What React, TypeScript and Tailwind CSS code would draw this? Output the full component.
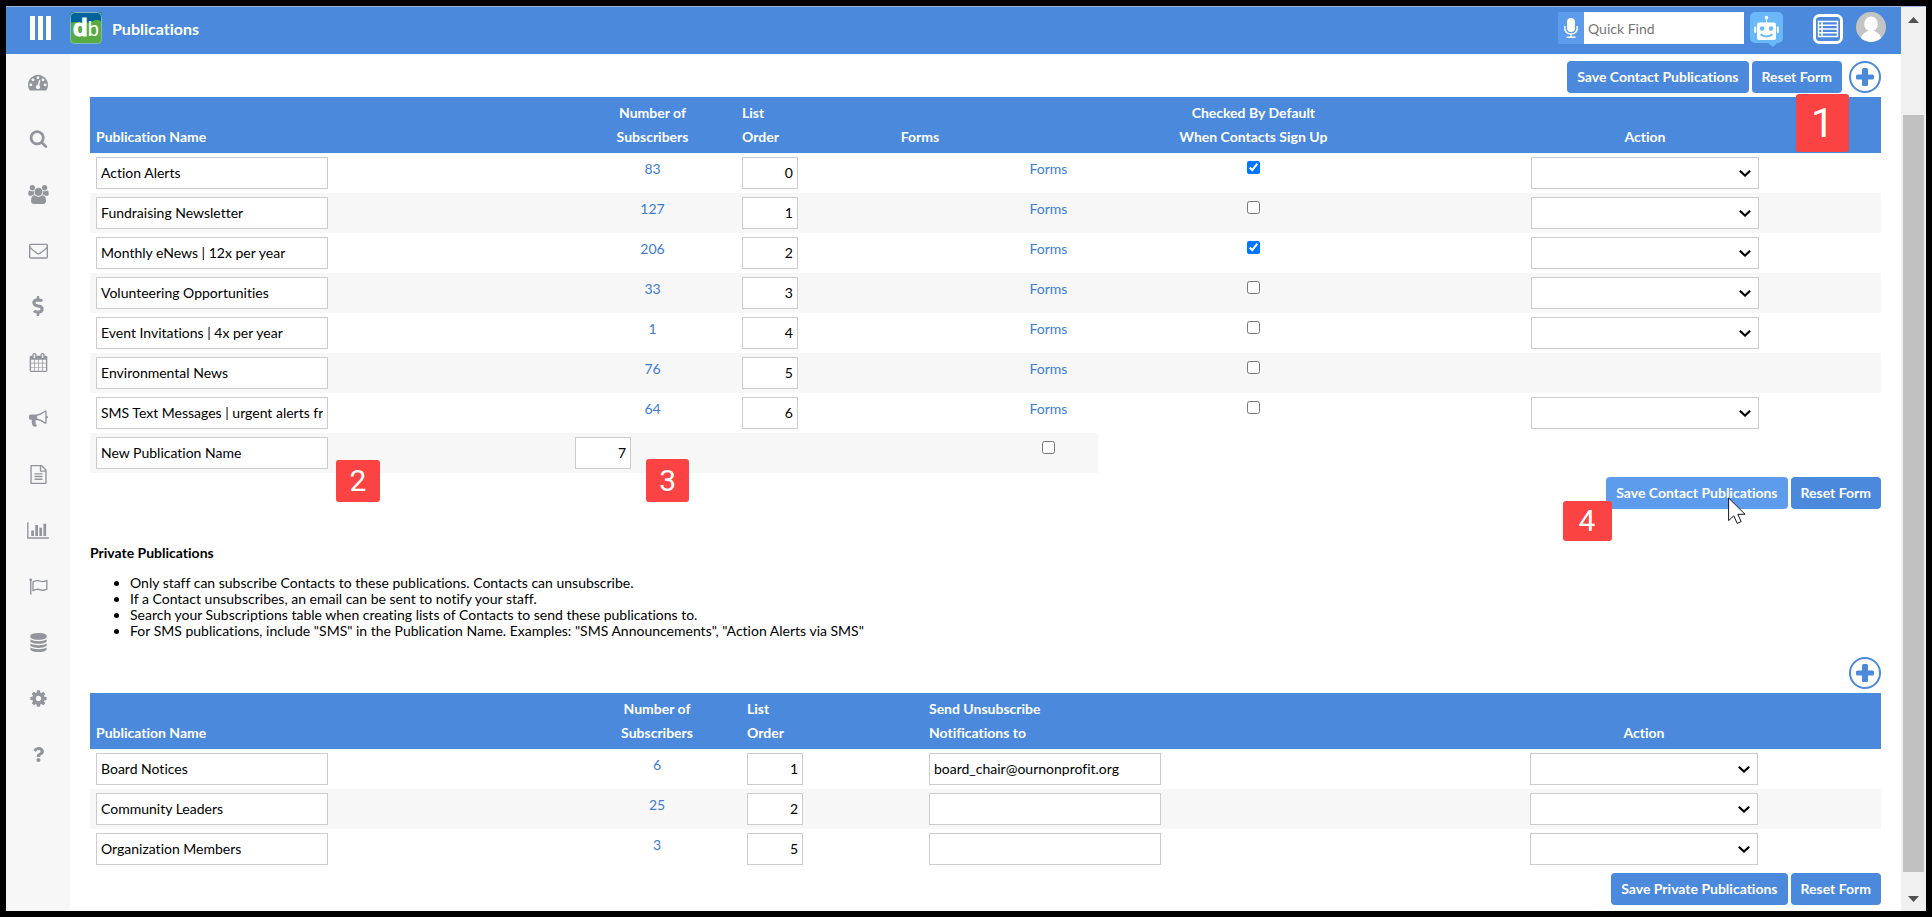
import { FaDollarSign, FaQuestion } from 'react-icons/fa'

interface IconProps {
  className?: string
}

interface Publication {
  name: string
  subscribers: number
  order: number
  checked?: boolean
  hasAction?: boolean
  notify?: string
}

const contactPublications: Publication[] = [
  { name: 'Action Alerts', subscribers: 83, order: 0, checked: true, hasAction: true },
  { name: 'Fundraising Newsletter', subscribers: 127, order: 1, hasAction: true },
  { name: 'Monthly eNews | 12x per year', subscribers: 206, order: 2, checked: true, hasAction: true },
  { name: 'Volunteering Opportunities', subscribers: 33, order: 3, hasAction: true },
  { name: 'Event Invitations | 4x per year', subscribers: 1, order: 4, hasAction: true },
  { name: 'Environmental News', subscribers: 76, order: 5 },
  { name: 'SMS Text Messages | urgent alerts from us', subscribers: 64, order: 6, hasAction: true }
]

const privatePublications: Publication[] = [
  { name: 'Board Notices', subscribers: 6, order: 1, notify: 'board_chair@ournonprofit.org' },
  { name: 'Community Leaders', subscribers: 25, order: 2, notify: '' },
  { name: 'Organization Members', subscribers: 3, order: 5, notify: '' }
]

const notes = [
  'Only staff can subscribe Contacts to these publications. Contacts can unsubscribe.',
  'If a Contact unsubscribes, an email can be sent to notify your staff.',
  'Search your Subscriptions table when creating lists of Contacts to send these publications to.',
  'For SMS publications, include "SMS" in the Publication Name. Examples: "SMS Announcements", "Action Alerts via SMS"'
]

const glyph = (viewBox: string, d: string) =>
  function Glyph({ className }: IconProps) {
    return (
      <svg viewBox={viewBox} fill="currentColor" className={className} aria-hidden="true">
        <path d={d} />
      </svg>
    )
  }

const Dashboard = glyph(
  '0 0 1792 1792',
  'M384 1152q0-53-37.5-90.5t-90.5-37.5-90.5 37.5-37.5 90.5 37.5 90.5 90.5 37.5 90.5-37.5 37.5-90.5zm192-448q0-53-37.5-90.5t-90.5-37.5-90.5 37.5-37.5 90.5 37.5 90.5 90.5 37.5 90.5-37.5 37.5-90.5zm428 481l101-382q6-26-7.5-48.5t-38.5-29.5-48 6.5-30 39.5l-101 382q-60 5-107 43.5t-63 98.5q-20 77 20 146t117 89 146-20 89-117q16-60-6-117t-72-91zm660-33q0-53-37.5-90.5t-90.5-37.5-90.5 37.5-37.5 90.5 37.5 90.5 90.5 37.5 90.5-37.5 37.5-90.5zm-640-640q0-53-37.5-90.5t-90.5-37.5-90.5 37.5-37.5 90.5 37.5 90.5 90.5 37.5 90.5-37.5 37.5-90.5zm448 192q0-53-37.5-90.5t-90.5-37.5-90.5 37.5-37.5 90.5 37.5 90.5 90.5 37.5 90.5-37.5 37.5-90.5zm320 448q0 261-141 483-19 29-54 29h-1402q-35 0-54-29-141-221-141-483 0-182 71-348t191-286 286-191 348-71 348 71 286 191 191 286 71 348z'
)
const Search = glyph(
  '0 0 1792 1792',
  'M1216 832q0-185-131.5-316.5t-316.5-131.5-316.5 131.5-131.5 316.5 131.5 316.5 316.5 131.5 316.5-131.5 131.5-316.5zm512 832q0 52-38 90t-90 38q-54 0-90-38l-343-342q-179 124-399 124-143 0-273.5-55.5t-225-150-150-225-55.5-273.5 55.5-273.5 150-225 225-150 273.5-55.5 273.5 55.5 225 150 150 225 55.5 273.5q0 220-124 399l343 343q37 37 37 90z'
)
const Group = glyph(
  '0 0 1920 1792',
  'M593 896q-162 5-265 128h-134q-82 0-138-40.5t-56-118.5q0-353 124-353 6 0 43.5 21t97.5 42.5 119 21.5q67 0 133-23-5 37-5 66 0 139 81 256zm1071 637q0 120-73 189.5t-194 69.5h-874q-121 0-194-69.5t-73-189.5q0-53 3.5-103.5t14-109 26.5-108.5 43-97.5 62-81 85.5-53.5 111.5-20q10 0 43 21.5t73 48 107 48 135 21.5 135-21.5 107-48 73-48 43-21.5q61 0 111.5 20t85.5 53.5 62 81 43 97.5 26.5 108.5 14 109 3.5 103.5zm-1024-1277q0 106-75 181t-181 75-181-75-75-181 75-181 181-75 181 75 75 181zm704 384q0 159-112.5 271.5t-271.5 112.5-271.5-112.5-112.5-271.5 112.5-271.5 271.5-112.5 271.5 112.5 112.5 271.5zm576 225q0 78-56 118.5t-138 40.5h-134q-103-123-265-128 81-117 81-256 0-29-5-66 66 23 133 23 59 0 119-21.5t97.5-42.5 43.5-21q124 0 124 353zm-128-609q0 106-75 181t-181 75-181-75-75-181 75-181 181-75 181 75 75 181z'
)
const Envelope = glyph(
  '0 0 1792 1792',
  'M1664 1504v-768q-32 36-69 66-268 206-426 338-51 43-83 67t-86.5 48.5-102.5 24.5h-2q-48 0-102.5-24.5t-86.5-48.5-83-67q-158-132-426-338-37-30-69-66v768q0 13 9.5 22.5t22.5 9.5h1472q13 0 22.5-9.5t9.5-22.5zm0-1051v-24.5l-.5-13-3-12.5-5.5-9-9-7.5-14-2.5h-1472q-13 0-22.5 9.5t-9.5 22.5q0 168 147 284 193 152 401 317 6 5 35 29.5t46 37.5 44.5 31.5 50.5 27.5 43 9h2q20 0 43-9t50.5-27.5 44.5-31.5 46-37.5 35-29.5q208-165 401-317 54-43 100.5-115.5t46.5-131.5zm128-37v1088q0 66-47 113t-113 47h-1472q-66 0-113-47t-47-113v-1088q0-66 47-113t113-47h1472q66 0 113 47t47 113z'
)
const Calendar = glyph(
  '0 0 1792 1792',
  'M192 1664h288v-288h-288v288zm352 0h320v-288h-320v288zm-352-352h288v-320h-288v320zm352 0h320v-320h-320v320zm-352-384h288v-288h-288v288zm736 736h320v-288h-320v288zm-384-736h320v-288h-320v288zm768 736h288v-288h-288v288zm-384-352h320v-320h-320v320zm-352-864v-288q0-13-9.5-22.5t-22.5-9.5h-64q-13 0-22.5 9.5t-9.5 22.5v288q0 13 9.5 22.5t22.5 9.5h64q13 0 22.5-9.5t9.5-22.5zm736 864h288v-320h-288v320zm-384-384h320v-288h-320v288zm384 0h288v-288h-288v288zm32-480v-288q0-13-9.5-22.5t-22.5-9.5h-64q-13 0-22.5 9.5t-9.5 22.5v288q0 13 9.5 22.5t22.5 9.5h64q13 0 22.5-9.5t9.5-22.5zm384-64v1280q0 52-38 90t-90 38h-1408q-52 0-90-38t-38-90v-1280q0-52 38-90t90-38h128v-96q0-66 47-113t113-47h64q66 0 113 47t47 113v96h384v-96q0-66 47-113t113-47h64q66 0 113 47t47 113v96h128q52 0 90 38t38 90z'
)
const Bullhorn = glyph(
  '0 0 1792 1792',
  'M1664 640q53 0 90.5 37.5t37.5 90.5-37.5 90.5-90.5 37.5v384q0 52-38 90t-90 38q-417-347-812-380-58 19-91 66t-31 100.5 40 92.5q-20 33-23 65.5t6 58 33.5 55 48 50 61.5 50.5q-29 58-111.5 83t-168.5 11.5-132-55.5q-7-23-29.5-87.5t-32-94.5-23-89-15-101 3.5-98.5 22-110.5h-122q-66 0-113-47t-47-113v-192q0-66 47-113t113-47h480q435 0 896-384 52 0 90 38t38 90v384zm-128 604v-954q-394 302-768 343v270q377 42 768 341z'
)
const FileText = glyph(
  '0 0 1792 1792',
  'M1596 380q28 28 48 76t20 88v1152q0 40-28 68t-68 28h-1344q-40 0-68-28t-28-68v-1600q0-40 28-68t68-28h896q40 0 88 20t76 48zm-444-244v376h376q-10-29-22-41l-313-313q-12-12-41-22zm384 1528v-1024h-416q-40 0-68-28t-28-68v-416h-768v1536h1280zm-1024-864q0-14 9-23t23-9h704q14 0 23 9t9 23v64q0 14-9 23t-23 9h-704q-14 0-23-9t-9-23v-64zm736 224q14 0 23 9t9 23v64q0 14-9 23t-23 9h-704q-14 0-23-9t-9-23v-64q0-14 9-23t23-9h704zm0 256q14 0 23 9t9 23v64q0 14-9 23t-23 9h-704q-14 0-23-9t-9-23v-64q0-14 9-23t23-9h704z'
)
const BarChart = glyph(
  '0 0 2048 1792',
  'M640 896v512h-256v-512h256zm384-512v1024h-256v-1024h256zm1024 1152v128h-2048v-1536h128v1408h1920zm-640-896v768h-256v-768h256zm384-384v1152h-256v-1152h256z'
)
const Database = glyph(
  '-64 0 1792 1792',
  'M832 768q237 0 443-43t325-127v170q0 69-103 128t-280 93.5-385 34.5-385-34.5-280-93.5-103-128v-170q119 84 325 127t443 43zm0 768q237 0 443-43t325-127v170q0 69-103 128t-280 93.5-385 34.5-385-34.5-280-93.5-103-128v-170q119 84 325 127t443 43zm0-384q237 0 443-43t325-127v170q0 69-103 128t-280 93.5-385 34.5-385-34.5-280-93.5-103-128v-170q119 84 325 127t443 43zm0-1152q208 0 385 34.5t280 93.5 103 128v128q0 69-103 128t-280 93.5-385 34.5-385-34.5-280-93.5-103-128v-128q0-69 103-128t280-93.5 385-34.5z'
)
const Cog = glyph(
  '0 0 1792 1792',
  'M1152 896q0-106-75-181t-181-75-181 75-75 181 75 181 181 75 181-75 75-181zm512-109v222q0 12-8 23t-20 13l-185 28q-19 54-39 91 35 50 107 138 10 12 10 25t-9 23q-27 37-99 108t-94 71q-12 0-26-9l-138-108q-44 23-91 38-16 136-29 186-7 28-36 28h-222q-14 0-24.5-8.5t-11.5-21.5l-28-184q-49-16-90-37l-141 107q-10 9-25 9-14 0-25-11-126-114-165-168-7-10-7-23 0-12 8-23 15-21 51-66.5t54-70.5q-27-50-41-99l-183-27q-13-2-21-12.5t-8-23.5v-222q0-12 8-23t19-13l186-28q14-46 39-92-40-57-107-138-10-12-10-24 0-10 9-23 26-36 98.5-107.5t94.5-71.5q13 0 26 10l138 107q44-23 91-38 16-136 29-186 7-28 36-28h222q14 0 24.5 8.5t11.5 21.5l28 184q49 16 90 37l142-107q9-9 24-9 13 0 25 10 129 119 165 170 7 8 7 22 0 12-8 23-15 21-51 66.5t-54 70.5q26 50 41 98l183 28q13 2 21 12.5t8 23.5z'
)
const Plus = glyph('0 0 18 18', 'M7.5 0h3q1.5 0 1.5 1.5V6.500h4.500q1.500 0 1.500 1.500v2q0 1.500-1.500 1.500H12v5q0 1.500-1.500 1.500h-3Q6 18 6 16.500v-5H1.500Q0 11.500 0 10V8q0-1.500 1.500-1.500H6v-5Q6 0 7.500 0z')

function Flag({ className }: IconProps) {
  return (
    <svg viewBox="0 0 20 20" className={className} fill="none" stroke="currentColor" aria-hidden="true">
      <circle cx="1.8" cy="3" r="1.5" fill="currentColor" stroke="none" />
      <path d="M1.8 3v15.500" strokeWidth="1.5" />
      <path d="M4.200 5.200c4-2.300 5.500-1.900 8 -.7 2.200 1 3.800.4 6.600-1v9.300c-2.700 1.400-4.500 1.900-6.800.7-2.300-1.100-4-1.300-7.800.9z" strokeWidth="1.4" strokeLinejoin="round" />
    </svg>
  )
}

function Microphone() {
  return (
    <svg viewBox="0 0 14 20" className="h-5 w-3.5" fill="none" stroke="white" aria-hidden="true">
      <rect x="3" y="0" width="8" height="14" rx="4" fill="white" stroke="none" />
      <path d="M.8 8v2.500a6.200 5.600 0 0 0 12.400 0V8M7 16v3M2.500 19.200h9" strokeWidth="1.5" />
    </svg>
  )
}

function Robot() {
  return (
    <svg viewBox="0 0 33 35" className="h-[35px] w-[33px]" aria-hidden="true">
      <path d="M5 0h23a5 5 0 0 1 5 5v21a5 5 0 0 1-5 5h-1l-4 4-5-4H5a5 5 0 0 1-5-5V5a5 5 0 0 1 5-5z" fill="#69b8f7" />
      <circle cx="16.5" cy="5.5" r="1.7" fill="white" />
      <path d="M16.500 6v5" stroke="white" strokeWidth="1.2" />
      <rect x="7" y="10.5" width="19" height="17.5" rx="2" fill="white" />
      <rect x="4.2" y="14.5" width="2" height="6.5" rx="1" fill="white" />
      <rect x="26.8" y="14.5" width="2" height="6.5" rx="1" fill="white" />
      <circle cx="12" cy="16.5" r="2.2" fill="#69b8f7" />
      <circle cx="21" cy="16.5" r="2.2" fill="#69b8f7" />
      <path d="M10.500 22.300c3.500 2.800 8.500 2.800 12 0" fill="none" stroke="#69b8f7" strokeWidth="2" />
    </svg>
  )
}

function ListMenu() {
  return (
    <svg viewBox="0 0 30 30" className="size-[30px]" fill="none" stroke="white" aria-hidden="true">
      <rect x="1.5" y="1.5" width="27" height="27" rx="5" strokeWidth="3" />
      <rect x="5.5" y="7.5" width="19" height="15" strokeWidth="1.5" />
      <path d="M5 11.300h20M5 15h20M5 18.700h20M9 7v16" strokeWidth="1.5" />
    </svg>
  )
}

function Avatar() {
  return (
    <svg viewBox="0 0 30 30" className="size-[30px] rounded-full" aria-hidden="true">
      <rect width="30" height="30" fill="#c4c4c4" />
      <ellipse cx="15" cy="12" rx="6.8" ry="7.5" fill="white" />
      <path d="M4 30c0-6 3.500-9 8-11h6c4.500 2 8 5 8 11z" fill="white" />
    </svg>
  )
}

function Logo() {
  return (
    <div className="relative flex size-8 items-center justify-center">
      <svg viewBox="0 0 32 32" className="absolute inset-0 size-8" aria-hidden="true">
        <rect width="32" height="32" rx="4" fill="#58ab42" />
        <path d="M4 0h24a4 4 0 0 1 4 4v6c-3-2.500-6-2.500-10-.5-6 3-14-1.500-22 1.500V4a4 4 0 0 1 4-4z" fill="#00639c" />
        <rect x=".5" y=".5" width="31" height="31" rx="4" fill="none" stroke="#7fb9c4" />
      </svg>
      <span className="relative flex items-baseline font-['Liberation_Sans',sans-serif] text-white">
        <span className="text-2xl leading-7 font-bold [-webkit-text-stroke:1px_white]">d</span>
        <span className="text-xl leading-7">b</span>
      </span>
    </div>
  )
}

const sidebarItems = [
  { name: 'Dashboard', icon: Dashboard, size: 'size-5' },
  { name: 'Search', icon: Search, size: 'size-[19px]' },
  { name: 'Contacts', icon: Group, size: 'h-[19px] w-[21px]' },
  { name: 'Email', icon: Envelope, size: 'size-[19px]' },
  { name: 'Donations', icon: FaDollarSign, size: 'size-5' },
  { name: 'Events', icon: Calendar, size: 'size-[19px]' },
  { name: 'Campaigns', icon: Bullhorn, size: 'size-[19px]' },
  { name: 'Forms', icon: FileText, size: 'size-[19px]' },
  { name: 'Reports', icon: BarChart, size: 'h-[19px] w-[22px]' },
  { name: 'Flags', icon: Flag, size: 'size-[19px]' },
  { name: 'Data', icon: Database, size: 'size-[19px]' },
  { name: 'Settings', icon: Cog, size: 'size-[19px]' },
  { name: 'Help', icon: FaQuestion, size: 'size-[15px]' }
]

function Sidebar() {
  return (
    <nav className="flex w-16 shrink-0 flex-col bg-[#f7f7f7] text-[#92959c]">
      {sidebarItems.map((item) => (
        <a key={item.name} href="#" aria-label={item.name} className="flex h-14 items-center justify-center">
          <item.icon className={item.size} />
        </a>
      ))}
    </nav>
  )
}

function Header() {
  return (
    <header className="flex h-12 items-start border-t border-[#a3b4dc] bg-[#4a89dc] pt-[5px]">
      <button type="button" aria-label="Menu" className="flex h-8 w-16 items-center gap-[3px] pl-6">
        <span className="h-6 w-[5px] bg-white" />
        <span className="h-6 w-[5px] bg-white" />
        <span className="h-6 w-[5px] bg-white" />
      </button>
      <Logo />
      <h1 className="ml-2.5 text-base leading-[34px] font-bold text-white">Publications</h1>
      <div className="ml-auto flex items-start pr-[15px]">
        <button type="button" aria-label="Voice search" className="flex h-8 w-[26px] items-center justify-center bg-[#5d9cec]">
          <Microphone />
        </button>
        <input
          type="text"
          aria-label="Quick Find"
          placeholder="Quick Find"
          className="h-8 w-40 bg-white px-1 placeholder:text-[#757575]"
        />
        <button type="button" aria-label="Assistant" className="ml-1.5">
          <Robot />
        </button>
        <button type="button" aria-label="List menu" className="mt-0.5 ml-[30px]">
          <ListMenu />
        </button>
        <button type="button" aria-label="Account" className="ml-[13px]">
          <Avatar />
        </button>
      </div>
    </header>
  )
}

function Button({ label, active }: { label: string; active?: boolean }) {
  return (
    <button
      type="button"
      className={`h-8 rounded px-2.5 font-bold text-white ${active ? 'bg-[#5d9cec]' : 'bg-[#4a89dc]'}`}
    >
      {label}
    </button>
  )
}

function AddButton() {
  return (
    <button
      type="button"
      aria-label="Add publication"
      className="flex size-8 items-center justify-center rounded-full border-2 border-[#4a89dc] text-[#4a89dc]"
    >
      <Plus className="size-[18px]" />
    </button>
  )
}

function TextBox({ label, value }: { label: string; value: string }) {
  return (
    <input
      type="text"
      aria-label={label}
      defaultValue={value}
      className="block h-8 w-[232px] border border-[#ccc] bg-white px-1 pb-0.5"
    />
  )
}

function OrderBox({ label, value }: { label: string; value: number }) {
  return (
    <input
      type="text"
      aria-label={label}
      defaultValue={value}
      className="block h-8 w-14 border border-[#ccc] bg-white px-1 pb-0.5 text-right"
    />
  )
}

function ActionSelect({ label }: { label: string }) {
  return (
    <div className="relative mx-auto w-[228px]">
      <select aria-label={label} className="block h-8 w-full appearance-none border border-[#ccc] bg-white px-1">
        <option></option>
      </select>
      <svg
        viewBox="0 0 12 8"
        className="pointer-events-none absolute top-3 right-2 h-2 w-3"
        fill="none"
        stroke="black"
        strokeWidth="2.2"
        aria-hidden="true"
      >
        <path d="M.8 1.800L6 6.500l5.200-4.700" />
      </svg>
    </div>
  )
}

function Badge({ value, className }: { value: number; className: string }) {
  return (
    <span
      className={`absolute z-10 flex items-center justify-center rounded-[3px] bg-[#fc4343] font-['Roboto',sans-serif] text-white ${className}`}
    >
      {value}
    </span>
  )
}

function Cursor() {
  return (
    <svg viewBox="0 0 18 27" className="absolute top-5 right-[42px] h-[27px] w-[18px]" aria-hidden="true">
      <path d="M.6 1v22.600l5.200-4.800 3.400 7.600 4-1.800-3.400-7.300h7.300z" fill="white" stroke="#15152a" strokeWidth="1" />
    </svg>
  )
}

const th = 'px-1.5 py-1 align-bottom leading-6 font-bold'
const td = 'px-1.5 py-1 align-top'

function ContactTable() {
  return (
    <table className="w-full table-fixed border-collapse">
      <colgroup>
        <col className="w-[26.75%]" />
        <col className="w-[9.32%]" />
        <col className="w-[5.86%]" />
        <col className="w-[8.82%]" />
        <col className="w-[5.53%]" />
        <col className="w-[17.36%]" />
        <col />
      </colgroup>
      <thead>
        <tr className="bg-[#4a89dc] text-white">
          <th className={`${th} text-left`}>Publication Name</th>
          <th className={`${th} text-center`}>Number of<br />Subscribers</th>
          <th className={`${th} text-left`}>List<br />Order</th>
          <th className={`${th} text-center`}>Forms</th>
          <td></td>
          <th className={`${th} text-center`}>Checked By Default<br />When Contacts Sign Up</th>
          <th className={`${th} text-center`}>Action</th>
        </tr>
      </thead>
      <tbody>
        {contactPublications.map((pub) => (
          <tr key={pub.name} className="even:bg-[#f7f7f7]">
            <td className={td}>
              <TextBox label="Publication Name" value={pub.name} />
            </td>
            <td className={`${td} text-center leading-6`}>
              <a href="#" className="text-[#3b7dd8]">{pub.subscribers}</a>
            </td>
            <td className={td}>
              <OrderBox label="List Order" value={pub.order} />
            </td>
            <td></td>
            <td className={`${td} text-center leading-6`}>
              <a href="#" className="text-[#3b7dd8]">Forms</a>
            </td>
            <td className={td}>
              <input
                type="checkbox"
                aria-label="Checked by default"
                defaultChecked={pub.checked}
                className="mx-auto mt-1 block size-[13px]"
              />
            </td>
            <td className={td}>{pub.hasAction && <ActionSelect label="Action" />}</td>
          </tr>
        ))}
        {/* New publication */}
        <tr>
          <td className={`${td} bg-[#f7f7f7]`}>
            <div className="relative">
              <TextBox label="New Publication Name" value="New Publication Name" />
              <Badge value={2} className="top-[23px] left-60 h-[42px] w-11 text-3xl" />
            </div>
          </td>
          <td className={`${td} bg-[#f7f7f7]`}>
            <div className="relative">
              <OrderBox label="New List Order" value={7} />
              <Badge value={3} className="top-[22px] left-[71px] h-[43px] w-[43px] text-3xl" />
            </div>
          </td>
          <td className="bg-[#f7f7f7]"></td>
          <td className="bg-[#f7f7f7]"></td>
          <td className={`${td} bg-[#f7f7f7]`}>
            <input type="checkbox" aria-label="New checked by default" className="mx-auto mt-1 block size-[13px]" />
          </td>
        </tr>
      </tbody>
    </table>
  )
}

function PrivateTable() {
  return (
    <table className="w-full table-fixed border-collapse">
      <colgroup>
        <col className="w-[26.97%]" />
        <col className="w-[9.38%]" />
        <col className="w-[10.16%]" />
        <col className="w-[27.02%]" />
        <col />
      </colgroup>
      <thead>
        <tr className="bg-[#4a89dc] text-white">
          <th className={`${th} text-left`}>Publication Name</th>
          <th className={`${th} text-center`}>Number of<br />Subscribers</th>
          <th className={`${th} text-left`}>List<br />Order</th>
          <th className={`${th} text-left`}>Send Unsubscribe<br />Notifications to</th>
          <th className={`${th} text-center`}>Action</th>
        </tr>
      </thead>
      <tbody>
        {privatePublications.map((pub) => (
          <tr key={pub.name} className="even:bg-[#f7f7f7]">
            <td className={td}>
              <TextBox label="Publication Name" value={pub.name} />
            </td>
            <td className={`${td} text-center leading-6`}>
              <a href="#" className="text-[#3b7dd8]">{pub.subscribers}</a>
            </td>
            <td className={td}>
              <OrderBox label="List Order" value={pub.order} />
            </td>
            <td className={td}>
              <TextBox label="Send Unsubscribe Notifications to" value={pub.notify ?? ''} />
            </td>
            <td className={td}>
              <ActionSelect label="Action" />
            </td>
          </tr>
        ))}
      </tbody>
    </table>
  )
}

function Scrollbar() {
  return (
    <div className="flex w-[25px] shrink-0 flex-col items-center border-t border-[#a3b4dc] bg-[#f0f0f0]" aria-hidden="true">
      <svg viewBox="0 0 25 24" className="h-6 w-[25px] shrink-0">
        <path d="M7 16l5.500-6 5.500 6z" fill="#505050" />
      </svg>
      <div className="grow-84" />
      <div className="w-[21px] grow-757 bg-[#c1c1c1]" />
      <div className="grow-15" />
      <svg viewBox="0 0 25 24" className="h-6 w-[25px] shrink-0">
        <path d="M7 9l5.500 6 5.500-6z" fill="#505050" />
      </svg>
    </div>
  )
}

export default function App() {
  return (
    <div className="flex min-h-screen border-6 border-black bg-white font-['Lato',sans-serif] text-sm text-black [font-variant-ligatures:none]">
      <div className="flex min-w-0 flex-1 flex-col">
        <Header />
        <div className="flex flex-1">
          <Sidebar />
          <main className="min-w-0 flex-1 px-5 pb-1.5">
            {/* Contact publications */}
            <div className="relative flex items-center justify-end pt-[7px] pb-1">
              <div className="mr-[7px] flex gap-[3px]">
                <Button label="Save Contact Publications" />
                <Button label="Reset Form" />
              </div>
              <AddButton />
              <Badge value={1} className="top-10 right-8 h-[58px] w-[53px] text-[41px]" />
            </div>
            <ContactTable />
            <div className="flex justify-end gap-[3px] pt-1">
              <div className="relative">
                <Button label="Save Contact Publications" active />
                <Badge value={4} className="top-6 right-44 h-10 w-[49px] text-3xl" />
                <Cursor />
              </div>
              <Button label="Reset Form" />
            </div>

            {/* Private publications */}
            <h2 className="mt-9 leading-4 font-bold">Private Publications</h2>
            <ul className="mt-3.5 list-disc pl-10 leading-4">
              {notes.map((note) => (
                <li key={note}>{note}</li>
              ))}
            </ul>
            <div className="flex justify-end pt-[18px] pb-1">
              <AddButton />
            </div>
            <PrivateTable />
            <div className="flex justify-end gap-[3px] pt-1">
              <Button label="Save Private Publications" />
              <Button label="Reset Form" />
            </div>
          </main>
        </div>
      </div>
      <Scrollbar />
    </div>
  )
}
